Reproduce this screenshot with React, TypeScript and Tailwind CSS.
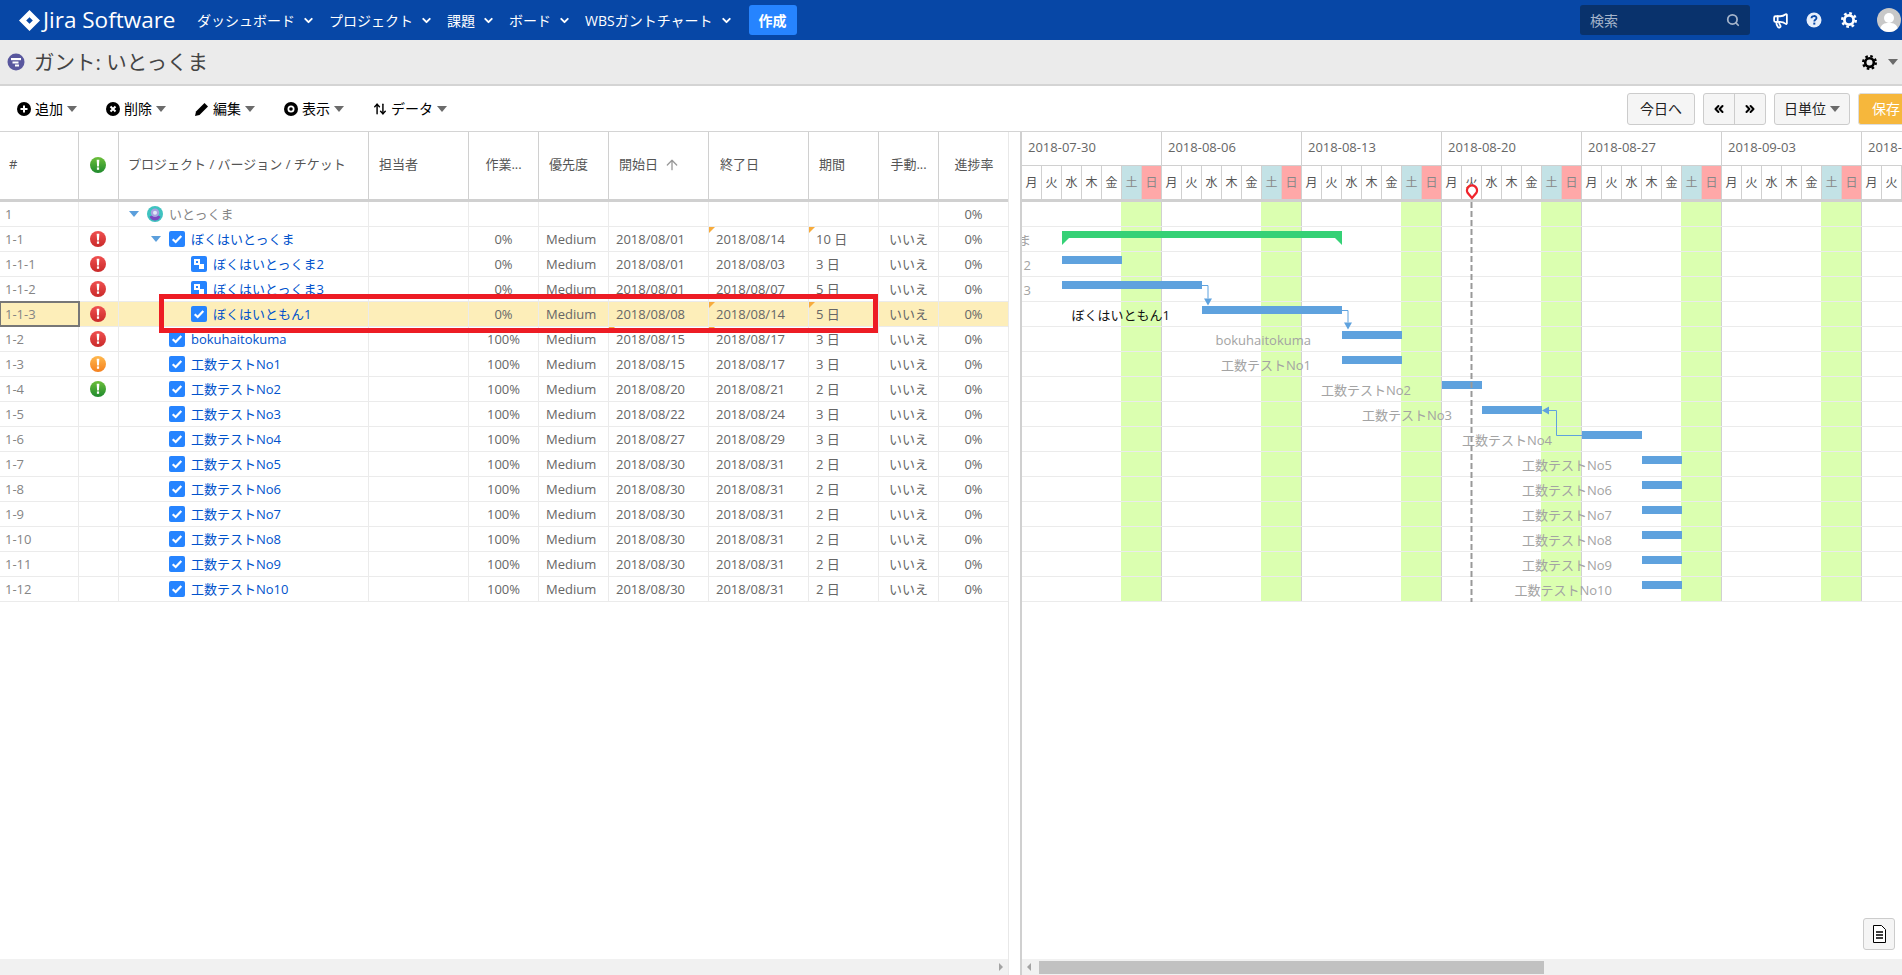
import { ChevronDown, Search, Megaphone, ChevronsLeft, ChevronsRight, ArrowUp, ArrowUpDown } from "lucide-react";

type Row = {
  no: string;
  alert?: "red" | "orange" | "green";
  level: number;
  kind: "project" | "task" | "subtask";
  open?: boolean;
  title: string;
  work?: string;
  start?: string;
  end?: string;
  days?: string;
  progress: string;
  bar?: { from: number; to: number; green?: boolean };
  labelRight?: number;
};

const ROWS: Row[] = [
  { no: "1", level: 0, kind: "project", open: true, title: "いとっくま", progress: "0%" },
  { no: "1-1", alert: "red", level: 1, kind: "task", open: true, title: "ぼくはいとっくま", work: "0%", start: "2018/08/01", end: "2018/08/14", days: "10 日", progress: "0%", bar: { from: 2, to: 16, green: true }, labelRight: 1031 },
  { no: "1-1-1", alert: "red", level: 2, kind: "subtask", title: "ぼくはいとっくま2", work: "0%", start: "2018/08/01", end: "2018/08/03", days: "3 日", progress: "0%", bar: { from: 2, to: 5 }, labelRight: 1031 },
  { no: "1-1-2", alert: "red", level: 2, kind: "subtask", title: "ぼくはいとっくま3", work: "0%", start: "2018/08/01", end: "2018/08/07", days: "5 日", progress: "0%", bar: { from: 2, to: 9 }, labelRight: 1031 },
  { no: "1-1-3", alert: "red", level: 2, kind: "task", title: "ぼくはいともん1", work: "0%", start: "2018/08/08", end: "2018/08/14", days: "5 日", progress: "0%", bar: { from: 9, to: 16 }, labelRight: 1170 },
  { no: "1-2", alert: "red", level: 1, kind: "task", title: "bokuhaitokuma", work: "100%", start: "2018/08/15", end: "2018/08/17", days: "3 日", progress: "0%", bar: { from: 16, to: 19 }, labelRight: 1311 },
  { no: "1-3", alert: "orange", level: 1, kind: "task", title: "工数テストNo1", work: "100%", start: "2018/08/15", end: "2018/08/17", days: "3 日", progress: "0%", bar: { from: 16, to: 19 }, labelRight: 1311 },
  { no: "1-4", alert: "green", level: 1, kind: "task", title: "工数テストNo2", work: "100%", start: "2018/08/20", end: "2018/08/21", days: "2 日", progress: "0%", bar: { from: 21, to: 23 }, labelRight: 1411 },
  { no: "1-5", level: 1, kind: "task", title: "工数テストNo3", work: "100%", start: "2018/08/22", end: "2018/08/24", days: "3 日", progress: "0%", bar: { from: 23, to: 26 }, labelRight: 1452 },
  { no: "1-6", level: 1, kind: "task", title: "工数テストNo4", work: "100%", start: "2018/08/27", end: "2018/08/29", days: "3 日", progress: "0%", bar: { from: 28, to: 31 }, labelRight: 1552 },
  { no: "1-7", level: 1, kind: "task", title: "工数テストNo5", work: "100%", start: "2018/08/30", end: "2018/08/31", days: "2 日", progress: "0%", bar: { from: 31, to: 33 }, labelRight: 1612 },
  { no: "1-8", level: 1, kind: "task", title: "工数テストNo6", work: "100%", start: "2018/08/30", end: "2018/08/31", days: "2 日", progress: "0%", bar: { from: 31, to: 33 }, labelRight: 1612 },
  { no: "1-9", level: 1, kind: "task", title: "工数テストNo7", work: "100%", start: "2018/08/30", end: "2018/08/31", days: "2 日", progress: "0%", bar: { from: 31, to: 33 }, labelRight: 1612 },
  { no: "1-10", level: 1, kind: "task", title: "工数テストNo8", work: "100%", start: "2018/08/30", end: "2018/08/31", days: "2 日", progress: "0%", bar: { from: 31, to: 33 }, labelRight: 1612 },
  { no: "1-11", level: 1, kind: "task", title: "工数テストNo9", work: "100%", start: "2018/08/30", end: "2018/08/31", days: "2 日", progress: "0%", bar: { from: 31, to: 33 }, labelRight: 1612 },
  { no: "1-12", level: 1, kind: "task", title: "工数テストNo10", work: "100%", start: "2018/08/30", end: "2018/08/31", days: "2 日", progress: "0%", bar: { from: 31, to: 33 }, labelRight: 1612 },
];

const WEEKS = ["2018-07-30", "2018-08-06", "2018-08-13", "2018-08-20", "2018-08-27", "2018-09-03", "2018-09-10"];
const DOW = ["月", "火", "水", "木", "金", "土", "日"];
const DAY_COUNT = 44;
const NAV = ["ダッシュボード", "プロジェクト", "課題", "ボード", "WBSガントチャート"];
const GANTT_LEFT = 1022;

const ALERT_COLOURS = {
  red: ["#f05050", "#c92a2a"],
  orange: ["#ffb84d", "#f4801f"],
  green: ["#6cbf3a", "#1f8a2e"],
};

function Alert({ colour }: { colour: "red" | "orange" | "green" }) {
  const [a, b] = ALERT_COLOURS[colour];
  return (
    <svg width="16" height="16" viewBox="0 0 16 16">
      <defs>
        <linearGradient id={`alert-${colour}`} x1="0" y1="0" x2="0" y2="1">
          <stop offset="0" stopColor={a} />
          <stop offset="1" stopColor={b} />
        </linearGradient>
      </defs>
      <circle cx="8" cy="8" r="8" fill={`url(#alert-${colour})`} />
      <path d="M6.7 2.8h2.6l-.4 6.6H7.1z" fill="#fff" />
      <rect x="6.9" y="10.4" width="2.2" height="2.4" fill="#fff" />
    </svg>
  );
}

function Gear({ size, className = "" }: { size: number; className?: string }) {
  return (
    <svg className={className} width={size} height={size} viewBox="0 0 16 16" fill="none" stroke="currentColor">
      <circle cx="8" cy="8" r="4.600" strokeWidth="2.800" />
      <circle cx="8" cy="8" r="6.800" strokeWidth="2.400" strokeDasharray="2.700 2.640" />
    </svg>
  );
}

function Caret({ className = "" }: { className?: string }) {
  return <span className={`inline-block h-0 w-0 border-x-[5px] border-t-[6px] border-x-transparent border-t-[#6b6b6b] ${className}`} />;
}

function TreeCaret() {
  return <span className="inline-block h-0 w-0 border-x-[5px] border-t-[6px] border-x-transparent border-t-[#5b9fdc]" />;
}

function RowIcon({ kind }: { kind: Row["kind"] }) {
  if (kind === "project") {
    return (
      <svg width="16" height="16" viewBox="0 0 16 16">
        <circle cx="8" cy="8" r="8" fill="#3fc3c0" />
        <path d="M2.5 10.500c1-1.500 10-1.500 11 0-1 3-3.500 4-5.500 4s-4.500-1-5.500-4z" fill="#7a48c0" />
        <circle cx="8" cy="6.800" r="4.200" fill="#a9a0e0" />
        <circle cx="8" cy="6.800" r="2" fill="#dfe9f7" />
      </svg>
    );
  }
  if (kind === "subtask") {
    return (
      <svg width="16" height="16" viewBox="0 0 16 16">
        <rect width="16" height="16" rx="2" fill="#2684ff" />
        <rect x="3.500" y="3.500" width="5" height="5" fill="#fff" stroke="#fff" />
        <rect x="5" y="5" width="2" height="2" fill="#2684ff" />
        <rect x="8" y="8" width="5" height="5" fill="#fff" />
      </svg>
    );
  }
  return (
    <svg width="16" height="16" viewBox="0 0 16 16">
      <rect width="16" height="16" rx="2" fill="#2684ff" />
      <path d="M3.700 8.200l3 2.800 5.600-6" fill="none" stroke="#fff" strokeWidth="2.200" />
    </svg>
  );
}

function Corner() {
  return <span className="absolute top-0 left-0 h-0 w-0 border-t-[6px] border-r-[6px] border-t-[#f7ab3c] border-r-transparent" />;
}

function ToolItem({ icon, label, className }: { icon: React.ReactNode; label: string; className: string }) {
  return (
    <div className={`flex items-center ${className}`}>
      <span className="flex w-[14px] justify-center">{icon}</span>
      <span className="ml-1 text-[14px] text-black">{label}</span>
      <Caret className="ml-1" />
    </div>
  );
}

function Th({ width, className = "", children }: { width: string; className?: string; children?: React.ReactNode }) {
  return <div className={`flex h-full shrink-0 items-center border-r border-[#d0d0d0] pb-[2px] text-[13px] text-[#555] ${width} ${className}`}>{children}</div>;
}

function Td({ width, className = "", children }: { width: string; className?: string; children?: React.ReactNode }) {
  return <div className={`relative flex h-full shrink-0 items-center border-r border-[#ebebeb] ${width} ${className}`}>{children}</div>;
}

function TableRow({ r }: { r: Row }) {
  const selected = r.no === "1-1-3";
  const cornerEnd = r.no === "1-1" || selected || r.no === "1-2";
  const cornerDays = r.no === "1-1" || selected;
  return (
    <div className={`flex h-[25px] border-b border-[#ebebeb] ${selected ? "bg-[#fdeeb9]" : ""}`}>
      <Td width="w-[79px]" className={`pt-[2px] pl-[5px] text-[#858585] ${selected ? "outline-2 -outline-offset-1 outline-[#777]" : ""}`}>{r.no}</Td>
      <Td width="w-[40px]" className="justify-center pr-[2px]">{r.alert && <Alert colour={r.alert} />}</Td>
      <Td width="w-[250px]" className={r.level === 0 ? "pl-[10px]" : r.level === 1 ? "pl-[32px]" : "pl-[72px]"}>
        {r.open && <span className="mr-[8px] flex w-[10px]"><TreeCaret /></span>}
        {!r.open && r.level === 1 && <span className="w-[18px]" />}
        <RowIcon kind={r.kind} />
        <span className={`mt-[2px] ml-[6px] whitespace-nowrap ${r.kind === "project" ? "text-[#858585]" : "text-[#0052cc]"}`}>{r.title}</span>
      </Td>
      <Td width="w-[100px]" />
      <Td width="w-[70px]" className="justify-center pt-[2px]">{r.work}</Td>
      <Td width="w-[70px]" className="pt-[2px] pl-[7px]">{r.start && "Medium"}</Td>
      <Td width="w-[100px]" className="pt-[2px] pl-[7px]">
        {r.no === "1-2" && <Corner />}
        {r.start}
      </Td>
      <Td width="w-[100px]" className="pt-[2px] pl-[7px]">
        {cornerEnd && <Corner />}
        {r.end}
      </Td>
      <Td width="w-[70px]" className="pt-[2px] pl-[7px]">
        {cornerDays && <Corner />}
        {r.days}
      </Td>
      <Td width="w-[60px]" className="justify-center pt-[2px]">{r.start && "いいえ"}</Td>
      <Td width="w-[70px]" className="justify-center pt-[2px]">{r.progress}</Td>
    </div>
  );
}

function GanttRow({ r }: { r: Row }) {
  const bar = r.bar;
  const isSelected = r.no === "1-1-3";
  return (
    <div className="relative h-[25px] border-b border-[#ebebeb]">
      {bar && r.labelRight && (
        <span
          className={`absolute top-0 flex h-[25px] -translate-x-full items-center pt-[2px] whitespace-nowrap ${isSelected ? "text-[#111]" : "text-[#a3a3a3]"}`}
          style={{ left: r.labelRight - GANTT_LEFT }}
        >
          {r.title}
        </span>
      )}
      {bar && !bar.green && (
        <div className="absolute top-[4px] h-[8px] bg-[#5fa2de]" style={{ left: bar.from * 20, width: (bar.to - bar.from) * 20 }} />
      )}
      {bar && bar.green && (
        <div className="absolute top-[4px]" style={{ left: bar.from * 20, width: (bar.to - bar.from) * 20 }}>
          <div className="h-[7px] bg-[#35d176]" />
          <span className="absolute top-[7px] left-0 h-0 w-0 border-t-[7px] border-r-[7px] border-t-[#35d176] border-r-transparent" />
          <span className="absolute top-[7px] right-0 h-0 w-0 border-t-[7px] border-l-[7px] border-t-[#35d176] border-l-transparent" />
        </div>
      )}
    </div>
  );
}

export default function App() {
  const days = WEEKS.flatMap((w) => DOW.map((d, j) => ({ key: w + d, d, j }))).slice(0, DAY_COUNT);
  return (
    <div className="relative flex h-[975px] w-[1902px] flex-col overflow-hidden bg-white font-['Open_Sans','Noto_Sans_CJK_JP',sans-serif] text-[13px] text-[#666]">
      <header className="flex h-[40px] shrink-0 items-center bg-[#0747a6] text-white">
        <svg className="ml-[19px]" width="21" height="21" viewBox="0 0 21 21">
          <path d="M10.500 0L21 10.500 10.500 21 0 10.500zM10.500 7.200L7.200 10.500l3.300 3.300 3.300-3.300z" fill="#fff" fillRule="evenodd" />
        </svg>
        <span className="ml-[3px] w-[154px] text-[22.5px] whitespace-nowrap">Jira Software</span>
        {NAV.map((n) => (
          <div key={n} className="mr-[14px] flex items-center text-[14px]">
            {n}
            <ChevronDown size={13} strokeWidth={3.500} className="ml-[7px]" />
          </div>
        ))}
        <button className="ml-[2px] h-[30px] w-[48px] rounded-[3px] bg-[#2684ff] text-[14px] font-bold">作成</button>
        <div className="ml-auto flex h-[30px] w-[170px] items-center justify-between rounded-[3px] bg-[#09326c] px-[10px] text-[14px] text-[#a5b4ca]">
          検索
          <Search size={14} strokeWidth={3} />
        </div>
        <Megaphone size={17} strokeWidth={2.500} className="ml-[22px]" />
        <svg className="ml-[17px]" width="16" height="16" viewBox="0 0 16 16">
          <circle cx="8" cy="8" r="7.500" fill="#e6eefb" />
          <path d="M5.500 6.300c0-3 5-3 5-.2 0 1.700-2.200 1.700-2.200 3.300" fill="none" stroke="#0747a6" strokeWidth="1.800" />
          <rect x="7.300" y="10.600" width="2" height="2" fill="#0747a6" />
        </svg>
        <Gear size={16} className="ml-[19px]" />
        <div className="relative mr-[1px] ml-[20px] h-[24px] w-[24px] overflow-hidden rounded-full bg-[#c8c8c8]">
          <span className="absolute top-[5px] left-[7px] h-[10px] w-[10px] rounded-full bg-white" />
          <span className="absolute top-[15px] left-[3px] h-[14px] w-[18px] rounded-full bg-white" />
        </div>
      </header>

      <div className="flex h-[46px] shrink-0 items-center border-b-2 border-[#d4d4d4] bg-[#ebebeb] pr-[2px] pl-[7px]">
        <svg width="18" height="18" viewBox="0 0 18 18">
          <circle cx="9" cy="9" r="8.500" fill="#59579e" />
          <rect x="4" y="5" width="10" height="2.200" fill="#fff" />
          <rect x="5.500" y="8.500" width="6" height="2" fill="#fff" />
          <rect x="8" y="11.500" width="4" height="2" fill="#fff" />
        </svg>
        <span className="ml-[9px] text-[20.5px] text-[#444]">ガント: いとっくま</span>
        <Gear size={15} className="ml-auto text-black" />
        <Caret className="mr-[2px] ml-[11px]" />
      </div>

      <div className="flex h-[46px] shrink-0 items-center border-b border-[#d4d4d4] pl-[17px]">
        <ToolItem
          className="w-[89px]"
          label="追加"
          icon={
            <svg width="14" height="14" viewBox="0 0 14 14">
              <circle cx="7" cy="7" r="7" fill="#000" />
              <path d="M7 3.500v7M3.500 7h7" stroke="#fff" strokeWidth="2" />
            </svg>
          }
        />
        <ToolItem
          className="w-[89px]"
          label="削除"
          icon={
            <svg width="14" height="14" viewBox="0 0 14 14">
              <circle cx="7" cy="7" r="7" fill="#000" />
              <path d="M4.500 4.500l5 5M9.500 4.500l-5 5" stroke="#fff" strokeWidth="2" />
            </svg>
          }
        />
        <ToolItem
          className="w-[89px]"
          label="編集"
          icon={
            <svg width="14" height="14" viewBox="0 0 14 14">
              <path d="M0 14l1-4.500L9.500 1l3.500 3.500L4.500 13z" fill="#000" />
            </svg>
          }
        />
        <ToolItem
          className="w-[89px]"
          label="表示"
          icon={
            <svg width="14" height="14" viewBox="0 0 14 14">
              <circle cx="7" cy="7" r="7" fill="#000" />
              <circle cx="7" cy="7" r="3.500" fill="#fff" />
              <circle cx="7" cy="7" r="1.800" fill="#000" />
            </svg>
          }
        />
        <ToolItem className="" label="データ" icon={<ArrowUpDown size={14} strokeWidth={2.500} className="text-black" />} />
        <div className="mr-[-4px] ml-auto flex items-center gap-[8px] text-[14px] text-[#222]">
          <button className="h-[32px] w-[68px] rounded-[3px] border border-[#ccc] bg-[#f5f5f5]">今日へ</button>
          <div className="flex h-[32px] w-[63px] rounded-[3px] border border-[#ccc] bg-[#f5f5f5]">
            <span className="flex w-[31px] items-center justify-center border-r border-[#ccc]"><ChevronsLeft size={14} strokeWidth={3.500} className="text-black" /></span>
            <span className="flex flex-1 items-center justify-center"><ChevronsRight size={14} strokeWidth={3.500} className="text-black" /></span>
          </div>
          <button className="flex h-[32px] w-[76px] items-center justify-center rounded-[3px] border border-[#ccc] bg-[#f5f5f5]">
            日単位
            <Caret className="ml-[4px]" />
          </button>
          <button className="h-[32px] w-[48px] rounded-l-[3px] border border-[#ddd] bg-[#f6b73c] pl-[13px] text-left text-white">保存</button>
        </div>
      </div>

      <div className="flex min-h-0 flex-1">
        <div className="flex w-[1009px] shrink-0 flex-col border-r border-[#e8e8e8]">
          <div className="flex h-[70px] shrink-0 items-stretch border-b-[3px] border-[#d0d0d0]">
            <Th width="w-[79px]" className="pl-[9px]">#</Th>
            <Th width="w-[40px]" className="justify-center pr-[2px]"><Alert colour="green" /></Th>
            <Th width="w-[250px]" className="pl-[9px]">プロジェクト / バージョン / チケット</Th>
            <Th width="w-[100px]" className="pl-[10px]">担当者</Th>
            <Th width="w-[70px]" className="justify-center">作業...</Th>
            <Th width="w-[70px]" className="pl-[10px]">優先度</Th>
            <Th width="w-[100px]" className="pl-[10px]">開始日<ArrowUp size={16} strokeWidth={2} className="ml-[6px] text-[#999]" /></Th>
            <Th width="w-[100px]" className="pl-[11px]">終了日</Th>
            <Th width="w-[70px]" className="pl-[10px]">期間</Th>
            <Th width="w-[60px]" className="justify-center">手動...</Th>
            <Th width="w-[70px]" className="justify-center border-r-0">進捗率</Th>
          </div>
          <div className="min-h-0 flex-1">
            {ROWS.map((r) => (
              <TableRow key={r.no} r={r} />
            ))}
          </div>
          <div className="relative h-[16px] shrink-0 bg-[#f1f1f1]">
            <span className="absolute top-[4px] right-[5px] h-0 w-0 border-y-[4px] border-l-[4px] border-y-transparent border-l-[#a3a3a3]" />
          </div>
        </div>

        <div className="w-[11px] shrink-0" />

        <div className="flex min-w-0 flex-1 flex-col border-l-2 border-[#d0d0d0]">
          <div className="h-[70px] shrink-0 overflow-hidden border-b-[3px] border-[#d0d0d0]">
            <div className="flex h-[34px] border-b border-[#d0d0d0]">
              {WEEKS.map((w) => (
                <div key={w} className="flex w-[140px] shrink-0 items-center border-r border-[#d0d0d0] pb-[2px] pl-[6px] whitespace-nowrap">{w}</div>
              ))}
            </div>
            <div className="flex h-[33px]">
              {days.map(({ key, d, j }) => (
                <div
                  key={key}
                  className={`flex w-[20px] shrink-0 items-center justify-center border-r border-[#d0d0d0] text-[12px] ${j === 5 ? "bg-[#c3e2e6] text-[#888]" : j === 6 ? "bg-[#ffa8a8] text-[#888]" : "text-[#555]"}`}
                >
                  {d}
                </div>
              ))}
            </div>
          </div>

          <div className="relative min-h-0 flex-1 overflow-hidden">
            <div className="absolute top-0 left-0 flex h-[400px]">
              {WEEKS.map((w) => (
                <div key={w} className="flex h-full w-[140px] shrink-0 justify-end border-r border-[#d0d0d0]">
                  <div className="h-full w-[40px] bg-[#dbffb0]" />
                </div>
              ))}
            </div>
            <div className="relative">
              {ROWS.map((r) => (
                <GanttRow key={r.no} r={r} />
              ))}
            </div>

            {/* dependency links and today line */}
            <svg className="absolute top-0 left-0" width="880" height="400">
              <path d="M180 83.500h6v13" fill="none" stroke="#5fa2de" />
              <path d="M182 96.500l4 7 4-7z" fill="#5fa2de" />
              <path d="M320 108.500h6v12" fill="none" stroke="#5fa2de" />
              <path d="M322 120.500l4 7 4-7z" fill="#5fa2de" />
              <path d="M560 233.500h-25.500v-25h-8" fill="none" stroke="#5fa2de" />
              <path d="M527 204.500l-7 4 7 4z" fill="#5fa2de" />
              <path d="M449.500 0v400" stroke="#999" strokeWidth="2" strokeDasharray="6 3" />
            </svg>

            <div className="absolute right-[7px] bottom-[9px] flex h-[32px] w-[32px] items-center justify-center rounded-[3px] border border-[#ccc] bg-[#f5f5f5]">
              <svg width="13" height="18" viewBox="0 0 13 18">
                <path d="M.500.500h8l4 4v13h-12z" fill="#fff" stroke="#000" />
                <path d="M3 7h7M3 10h7M3 13h7" stroke="#000" strokeWidth="1.400" />
              </svg>
            </div>
          </div>

          <div className="relative h-[16px] shrink-0 bg-[#f1f1f1]">
            <span className="absolute top-[4px] left-[5px] h-0 w-0 border-y-[4px] border-r-[4px] border-y-transparent border-r-[#a3a3a3]" />
            <div className="absolute top-[2px] left-[17px] h-[13px] w-[505px] bg-[#c1c1c1]" />
          </div>
        </div>
      </div>

      {/* today marker */}
      <svg className="absolute top-[184px] left-[1465px]" width="14" height="16" viewBox="0 0 14 16">
        <path d="M7 14L2.600 8.800a5 5 0 1 1 8.800 0z" fill="#fff" stroke="#f0242c" strokeWidth="2.200" />
      </svg>

      {/* annotation */}
      <div className="absolute top-[294px] left-[159px] h-[39px] w-[719px] border-[5px] border-[#ed1c24]" />
    </div>
  );
}
